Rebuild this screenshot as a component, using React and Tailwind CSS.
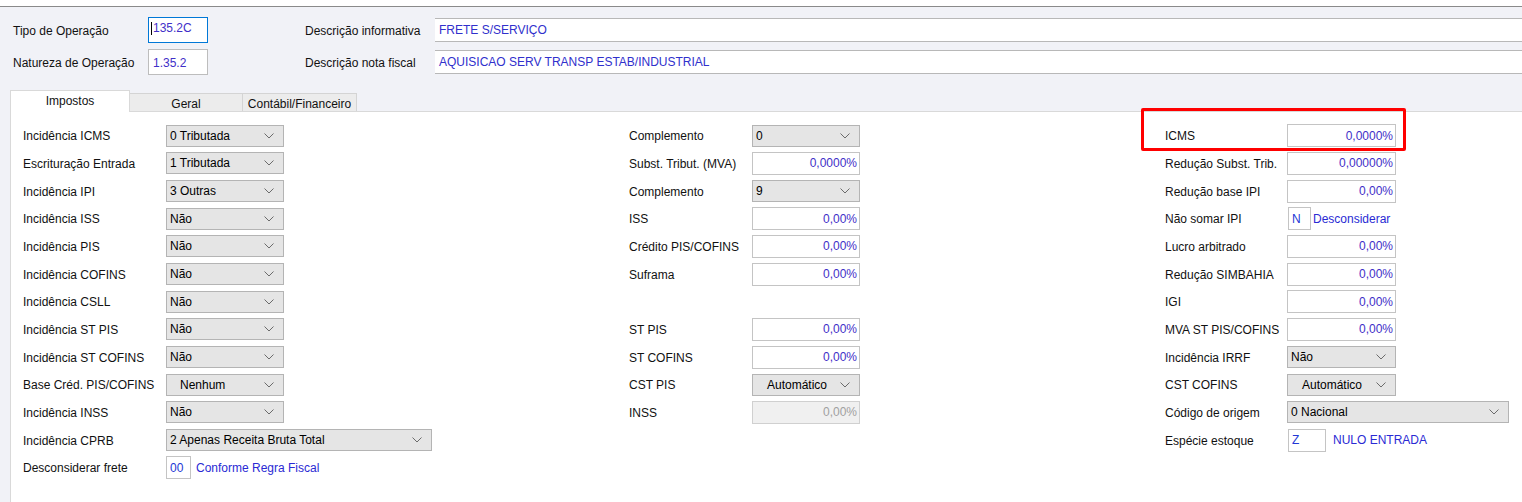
import React from "react";

function Chevron() {
  return (
    <svg width="10" height="6" viewBox="0 0 10 6" className="shrink-0">
      <polyline points="0.5,0.5 5,5 9.5,0.5" fill="none" stroke="#6b6b6b" strokeWidth="1" />
    </svg>
  );
}

function Sel({ w, value, center }) {
  return (
    <div className={"h-[22px] bg-[#e5e5e5] border border-[#b4b4b4] flex items-center pr-[9px] " + w}>
      <span className={center ? "flex-1 text-center pl-[6px] text-black" : "flex-1 pl-[3px] text-black"}>{value}</span>
      <Chevron />
    </div>
  );
}

function Num({ w, value, disabled }) {
  return (
    <div
      className={
        "h-[23px] border flex items-center justify-end pr-[2px] " +
        (disabled ? "bg-[#f0f0f0] border-[#d0d0d0] text-[#a0a0a0] " : "bg-white border-[#c4c4c4] text-[#3f2fc8] ") +
        w
      }
    >
      {value}
    </div>
  );
}

function Code({ w, value, link }) {
  return (
    <div className="flex items-center">
      <div className={"h-[23px] bg-white border border-[#c4c4c4] flex items-center pl-[3px] text-[#2337d5] " + w}>{value}</div>
      <span className="ml-[5px] text-[#2a2ad4]">{link}</span>
    </div>
  );
}

function Row({ label, lw, children }) {
  return (
    <div className="h-[27.67px] flex items-center">
      <div className={"shrink-0 text-[#111111] pt-px " + lw}>{label}</div>
      {children}
    </div>
  );
}

export default function App() {
  const L = "w-[143px]";
  const M = "w-[123px]";
  const R = "w-[122px]";
  return (
    <div className="relative w-[1522px] h-[502px] overflow-hidden bg-white font-['Liberation_Sans',Arial,sans-serif] text-[12px] leading-none flex flex-col">
      <div className="h-[6px] bg-white shrink-0" />
      <div className="flex-1 flex flex-col bg-[#f1f2f7] border-t border-[#8a8a8a]">
        {/* header */}
        <div className="pt-[10px] flex flex-col gap-[6px]">
          <div className="h-[26px] flex items-center">
            <div className="pl-[13px] w-[148px] pt-px text-[#111111]">Tipo de Operação</div>
            <div className="w-[60px] h-[26px] bg-white border border-[#0078d7] flex items-start pt-[4px] pl-[2px] text-[#3f2fc8]">
              <span className="w-px h-[13px] bg-black mr-px" />
              135.2C
            </div>
            <div className="ml-[97px] w-[130px] pt-px text-[#111111]">Descrição informativa</div>
            <div className="flex-1 h-[24px] bg-white border-y border-[#b8b8b8] flex items-center pl-[4px] text-[#3030cc]">FRETE S/SERVIÇO</div>
          </div>
          <div className="h-[26px] flex items-center">
            <div className="pl-[13px] w-[148px] pt-px text-[#111111]">Natureza de Operação</div>
            <div className="w-[60px] h-[26px] bg-white border border-[#bdbdbd] flex items-center pl-[4px] pt-px text-[#3f2fc8]">1.35.2</div>
            <div className="ml-[97px] w-[130px] pt-px text-[#111111]">Descrição nota fiscal</div>
            <div className="flex-1 h-[24px] bg-white border-y border-[#b8b8b8] flex items-center pl-[4px] text-[#3030cc]">AQUISICAO SERV TRANSP ESTAB/INDUSTRIAL</div>
          </div>
        </div>
        {/* tabs */}
        <div className="mt-[15px] pl-[10px] flex items-end">
          <div className="relative z-10 -mb-px w-[120px] h-[22px] bg-white border-t border-x border-[#d9d9d9] flex items-center justify-center pb-[2px] text-[#111111]">Impostos</div>
          <div className="w-[113px] h-[18px] bg-[#ececec] border-t border-r border-[#d4d4d4] flex items-center justify-center pt-[2px] text-[#111111]">Geral</div>
          <div className="w-[114px] h-[18px] bg-[#ececec] border-t border-r border-[#d4d4d4] flex items-center justify-center pt-[2px] text-[#111111]">Contábil/Financeiro</div>
        </div>
        {/* panel */}
        <div className="flex-1 ml-[10px] bg-white border-t border-l border-[#d9d9d9] pt-[10px] pl-[12px] flex">
          <div className="w-[606px] flex flex-col">
            <Row label="Incidência ICMS" lw={L}><Sel w="w-[118px]" value="0 Tributada" /></Row>
            <Row label="Escrituração Entrada" lw={L}><Sel w="w-[118px]" value="1 Tributada" /></Row>
            <Row label="Incidência IPI" lw={L}><Sel w="w-[118px]" value="3 Outras" /></Row>
            <Row label="Incidência ISS" lw={L}><Sel w="w-[118px]" value="Não" /></Row>
            <Row label="Incidência PIS" lw={L}><Sel w="w-[118px]" value="Não" /></Row>
            <Row label="Incidência COFINS" lw={L}><Sel w="w-[118px]" value="Não" /></Row>
            <Row label="Incidência CSLL" lw={L}><Sel w="w-[118px]" value="Não" /></Row>
            <Row label="Incidência ST PIS" lw={L}><Sel w="w-[118px]" value="Não" /></Row>
            <Row label="Incidência ST COFINS" lw={L}><Sel w="w-[118px]" value="Não" /></Row>
            <Row label="Base Créd. PIS/COFINS" lw={L}>
              <div className="h-[22px] w-[118px] bg-[#e5e5e5] border border-[#b4b4b4] flex items-center pr-[9px]">
                <span className="flex-1 pl-[13px] text-black">Nenhum</span>
                <Chevron />
              </div>
            </Row>
            <Row label="Incidência INSS" lw={L}><Sel w="w-[118px]" value="Não" /></Row>
            <Row label="Incidência CPRB" lw={L}><Sel w="w-[266px]" value="2 Apenas Receita Bruta Total" /></Row>
            <Row label="Desconsiderar frete" lw={L}><Code w="w-[25px]" value="00" link="Conforme Regra Fiscal" /></Row>
          </div>
          <div className="w-[536px] flex flex-col">
            <Row label="Complemento" lw={M}><Sel w="w-[108px]" value="0" /></Row>
            <Row label="Subst. Tribut. (MVA)" lw={M}><Num w="w-[108px]" value="0,0000%" /></Row>
            <Row label="Complemento" lw={M}><Sel w="w-[108px]" value="9" /></Row>
            <Row label="ISS" lw={M}><Num w="w-[108px]" value="0,00%" /></Row>
            <Row label="Crédito PIS/COFINS" lw={M}><Num w="w-[108px]" value="0,00%" /></Row>
            <Row label="Suframa" lw={M}><Num w="w-[108px]" value="0,00%" /></Row>
            <div className="h-[27.67px]" />
            <Row label="ST PIS" lw={M}><Num w="w-[108px]" value="0,00%" /></Row>
            <Row label="ST COFINS" lw={M}><Num w="w-[108px]" value="0,00%" /></Row>
            <Row label="CST PIS" lw={M}>
              <div className="h-[22px] w-[108px] bg-[#e5e5e5] border border-[#b4b4b4] flex items-center pr-[9px]">
                <span className="flex-1 pl-[14px] text-black">Automático</span>
                <Chevron />
              </div>
            </Row>
            <Row label="INSS" lw={M}><Num w="w-[108px]" value="0,00%" disabled /></Row>
          </div>
          <div className="flex-1 flex flex-col">
            <Row label="ICMS" lw={R}><Num w="w-[109px]" value="0,0000%" /></Row>
            <Row label="Redução Subst. Trib." lw={R}><Num w="w-[109px]" value="0,00000%" /></Row>
            <Row label="Redução base IPI" lw={R}><Num w="w-[109px]" value="0,00%" /></Row>
            <Row label="Não somar IPI" lw={R}>
              <div className="flex items-center ml-px">
                <div className="h-[23px] w-[23px] bg-white border border-[#c4c4c4] flex items-center pl-[3px] text-[#2337d5]">N</div>
                <span className="ml-[2px] text-[#2a2ad4]">Desconsiderar</span>
              </div>
            </Row>
            <Row label="Lucro arbitrado" lw={R}><Num w="w-[109px]" value="0,00%" /></Row>
            <Row label="Redução SIMBAHIA" lw={R}><Num w="w-[109px]" value="0,00%" /></Row>
            <Row label="IGI" lw={R}><Num w="w-[109px]" value="0,00%" /></Row>
            <Row label="MVA ST PIS/COFINS" lw={R}><Num w="w-[109px]" value="0,00%" /></Row>
            <Row label="Incidência IRRF" lw={R}><Sel w="w-[109px]" value="Não" /></Row>
            <Row label="CST COFINS" lw={R}>
              <div className="h-[22px] w-[109px] bg-[#e5e5e5] border border-[#b4b4b4] flex items-center pr-[9px]">
                <span className="flex-1 pl-[14px] text-black">Automático</span>
                <Chevron />
              </div>
            </Row>
            <Row label="Código de origem" lw={R}><Sel w="w-[222px]" value="0 Nacional" /></Row>
            <Row label="Espécie estoque" lw={R}>
              <div className="flex items-center ml-px">
                <div className="h-[23px] w-[38px] bg-white border border-[#c4c4c4] flex items-center pl-[3px] text-[#2337d5]">Z</div>
                <span className="ml-[7px] text-[#2a2ad4]">NULO ENTRADA</span>
              </div>
            </Row>
          </div>
        </div>
      </div>
      <div className="absolute left-[1141px] top-[108px] w-[265px] h-[43px] border-[3px] border-[#ff0000] rounded-[2px]" />
    </div>
  );
}
